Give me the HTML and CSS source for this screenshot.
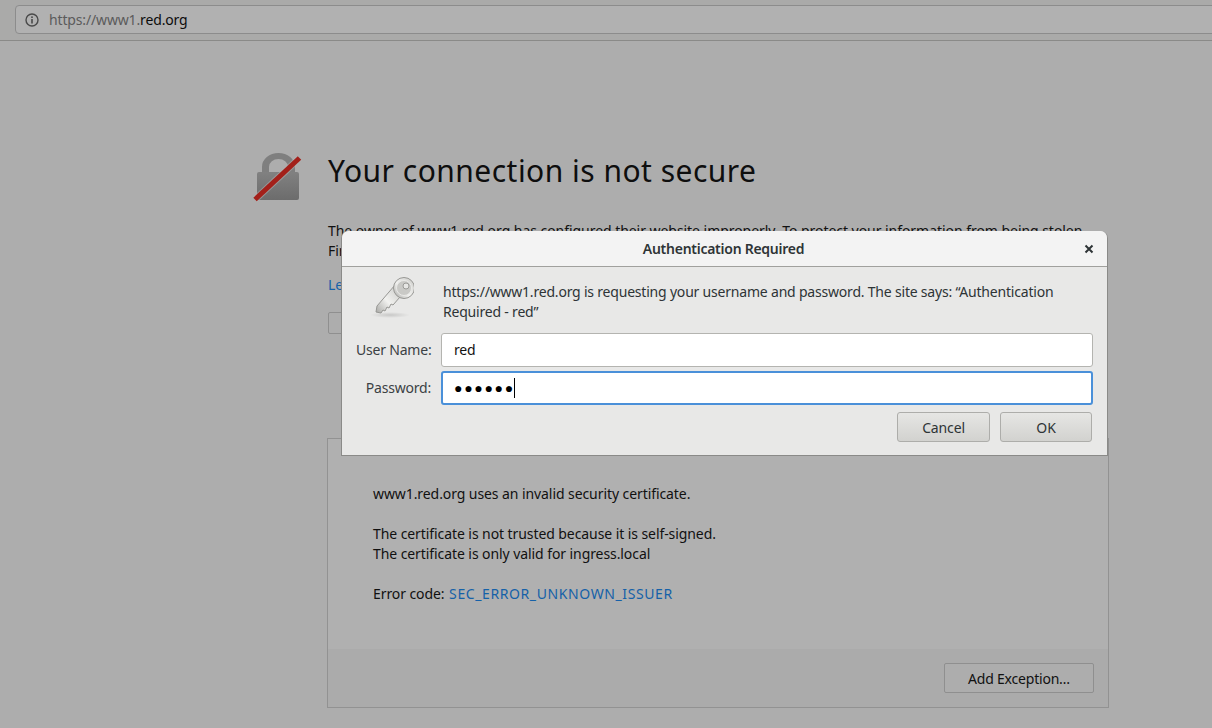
FILE: index.html
```html
<!DOCTYPE html>
<html lang="en">
<head>
<meta charset="utf-8">
<title>Your connection is not secure</title>
<link rel="stylesheet" href="styles.css">
</head>
<body>
<header class="toolbar">
  <div class="urlbar">
    <svg class="info" width="16" height="16" viewBox="0 0 16 16"><circle cx="8" cy="8" r="6" fill="none" stroke="#4a4a4a" stroke-width="1.4"/><rect x="7.2" y="7" width="1.6" height="4.5" fill="#4a4a4a"/><rect x="7.2" y="4.4" width="1.6" height="1.6" fill="#4a4a4a"/></svg>
    <span class="url"><span class="url-dim">https://www1.</span>red.org</span>
  </div>
</header>
<main class="page">
  <div class="error-head">
    <svg class="lock" width="50" height="50" viewBox="0 0 50 50">
      <defs><linearGradient id="lockfill" x1="0" y1="0" x2="0" y2="1"><stop offset="0" stop-color="#818181"/><stop offset="1" stop-color="#6c6c6c"/></linearGradient></defs>
      <path d="M10 20V14a16.500 14 0 0 1 33 0v6h-7v-6a9.500 8 0 0 0-19 0v6z" fill="#7f7f7f"/>
      <rect x="5" y="19" width="42" height="28" rx="2" fill="url(#lockfill)"/>
      <path d="M3 46.500L47.500 5" stroke="#b4b4b4" stroke-opacity=".55" stroke-width="7" fill="none"/>
      <path d="M3 46.500L47.500 5" stroke="#a3201a" stroke-width="5" fill="none"/>
    </svg>
    <h1 class="title">Your connection is not secure</h1>
  </div>
  <div class="content">
    <p class="lead">The owner of www1.red.org has configured their website improperly. To protect your information from being stolen, Firefox has not connected to this website.</p>
    <a class="learn">Learn more…</a>
    <div class="actions"><button class="page-btn back">Go Back</button></div>
    <section class="panel">
      <div class="panel-body">
        <p>www1.red.org uses an invalid security certificate.</p>
        <p>The certificate is not trusted because it is self-signed.<br>The certificate is only valid for ingress.local</p>
        <p>Error code: <a class="code">SEC_ERROR_UNKNOWN_ISSUER</a></p>
      </div>
      <div class="panel-foot"><button class="page-btn add">Add Exception…</button></div>
    </section>
  </div>
</main>
<div class="dialog">
  <div class="dialog-head">
    <span class="dialog-title">Authentication Required</span>
    <svg class="close" width="10" height="10" viewBox="0 0 10 10"><path d="M1.500 1.500l7 7M8.500 1.500l-7 7" stroke="#2e3436" stroke-width="2"/></svg>
  </div>
  <div class="dialog-body">
    <div class="message">
      <svg class="key" width="48" height="48" viewBox="0 0 48 48">
        <defs>
          <linearGradient id="keyfill" x1="0" y1="1" x2="1" y2="0"><stop offset="0" stop-color="#a8a8a5"/><stop offset=".45" stop-color="#f2f2f0"/><stop offset="1" stop-color="#c8c8c5"/></linearGradient>
          <radialGradient id="keyshadow"><stop offset="0" stop-color="#000" stop-opacity=".14"/><stop offset="1" stop-color="#000" stop-opacity="0"/></radialGradient>
        </defs>
        <ellipse cx="24" cy="41" rx="20" ry="3" fill="url(#keyshadow)"/>
        <path d="M29 11L11 32 10 38 15 39 17 36 19 37 21 33 23 34 25 30 27 31 34 23z" fill="url(#keyfill)" stroke="#979794"/>
        <circle cx="38" cy="14" r="10.500" fill="url(#keyfill)" stroke="#979794"/>
        <circle cx="38" cy="14" r="7.500" fill="#c9c9c6" stroke="#e9e9e7"/>
        <circle cx="40" cy="12" r="3" fill="#e6e6e4" stroke="#9a9a97"/>
      </svg>
      <p class="message-text">https://www1.red.org is requesting your username and password. The site says: “Authentication Required - red”</p>
    </div>
    <div class="form">
      <label class="form-label">User Name:</label>
      <div class="field">red</div>
      <label class="form-label">Password:</label>
      <div class="field focus"><span class="dots">●●●●●●</span><span class="caret"></span></div>
    </div>
    <div class="dialog-actions">
      <button class="dlg-btn cancel">Cancel</button>
      <button class="dlg-btn ok">OK</button>
    </div>
  </div>
</div>
</body>
</html>
```
FILE: styles.css
```css
* { box-sizing: border-box; }
html, body { margin: 0; height: 100%; overflow: hidden; }
body {
  background: #adadad;
  color: #111;
  font-family: "Noto Sans", "Open Sans", sans-serif;
  font-size: 14px;
  letter-spacing: -0.08px;
  width: 1212px;
  height: 728px;
  position: relative;
}
.toolbar {
  height: 41px;
  padding: 5px 0 6px 15px;
  border-bottom: 1px solid #8a8a88;
  background: #aaaaa9;
}
.urlbar {
  height: 29px;
  width: 1240px;
  display: flex;
  align-items: center;
  padding-left: 8px;
  gap: 9px;
  background: #b1b1b1;
  border: 1px solid #8c8c8c;
  border-radius: 4px;
}
.url { font-size: 14px; letter-spacing: -0.15px; color: #0c0c0c; }
.url-dim { color: #5b5b5b; }
.info { flex: none; }
.page { padding: 112px 0 0 252px; }
.error-head { display: flex; align-items: flex-start; gap: 26px; height: 68px; }
.lock { flex: none; }
.title {
  margin: 0;
  font-weight: 400;
  font-size: 30px;
  letter-spacing: 0.48px;
  line-height: 36px;
  color: #0e0e0e;
}
.content { padding-left: 76px; margin-top: 0; width: 856px; }
.lead { margin: 0; line-height: 20px; width: 780px; letter-spacing: -0.045px; }
.learn { display: block; margin-top: 14px; line-height: 20px; color: #1561a8; }
.actions { margin-top: 17px; height: 22px; display: flex; }
.page-btn {
  font: inherit;
  letter-spacing: -0.2px;
  color: #111;
  background: #adadad;
  border: 1px solid #8f8f8f;
  border-radius: 2px;
  padding: 0;
}
.back { width: 120px; height: 22px; }
.panel {
  margin-top: 104px;
  margin-left: -1px;
  width: 782px;
  height: 270px;
  border: 1px solid #929292;
  background: #b0b0b0;
  display: flex;
  flex-direction: column;
}
.panel-body { flex: 1; padding: 45px 0 0 45px; }
.panel-body p { margin: 0 0 20px; line-height: 20px; }
.code { color: #1561a8; letter-spacing: 0.6px; margin-left: 1px; }
.panel-foot {
  height: 58px;
  background: #ababab;
  padding: 14px 14px 0 0;
  display: flex;
  justify-content: flex-end;
}
.add { width: 150px; height: 30px; }
.dialog {
  position: absolute;
  left: 341px;
  top: 231px;
  width: 767px;
  height: 225px;
  border: 1px solid #8a8a88;
  border-top: 0;
  border-radius: 7px 7px 0 0;
  background: #e8e8e7;
  color: #2e3436;
  letter-spacing: -0.2px;
}
.dialog-head {
  height: 36px;
  padding-right: 2px;
  background: #f3f3f3;
  border-bottom: 1px solid #a0a09d;
  border-radius: 7px 7px 0 0;
  display: flex;
  align-items: center;
  justify-content: center;
  position: relative;
}
.dialog-title { font-size: 14px; font-weight: 600; letter-spacing: -0.26px; }
.close { position: absolute; right: 13px; top: 13px; }
.dialog-body { padding: 15px 15px 0 14px; }
.message { display: flex; align-items: flex-start; height: 51px; }
.key { flex: none; margin: -8px 0 0 10px; width: 48px; height: 48px; }
.message-text { margin: 0 0 0 29px; line-height: 20px; width: 640px; }
.form {
  display: grid;
  grid-template-columns: 76px 1fr;
  column-gap: 9px;
  row-gap: 4px;
  margin-right: -1px;
}
.form-label { text-align: right; line-height: 34px; color: #3b4144; white-space: nowrap; padding-right: 1px; }
.field {
  height: 34px;
  background: #fff;
  border: 1px solid #b4b4b0;
  border-radius: 3px;
  padding-left: 12px;
  line-height: 32px;
  color: #111;
  display: flex;
  align-items: center;
}
.field.focus { border: 2px solid #4a90d9; padding-left: 11px; }
.dots { font-size: 14px; letter-spacing: 1.7px; color: #000; }
.caret { width: 1px; height: 20px; background: #000; margin-left: -1px; }
.dialog-actions { display: flex; justify-content: flex-end; gap: 10px; margin-top: 7px; }
.dlg-btn {
  font: inherit;
  letter-spacing: -0.15px;
  color: #2e3436;
  height: 30px;
  width: 93px;
  padding: 0;
  border: 1px solid #adadaa;
  border-radius: 3px;
  background: linear-gradient(#e6e6e4, #d2d2cf);
}
.ok { width: 92px; }
```
